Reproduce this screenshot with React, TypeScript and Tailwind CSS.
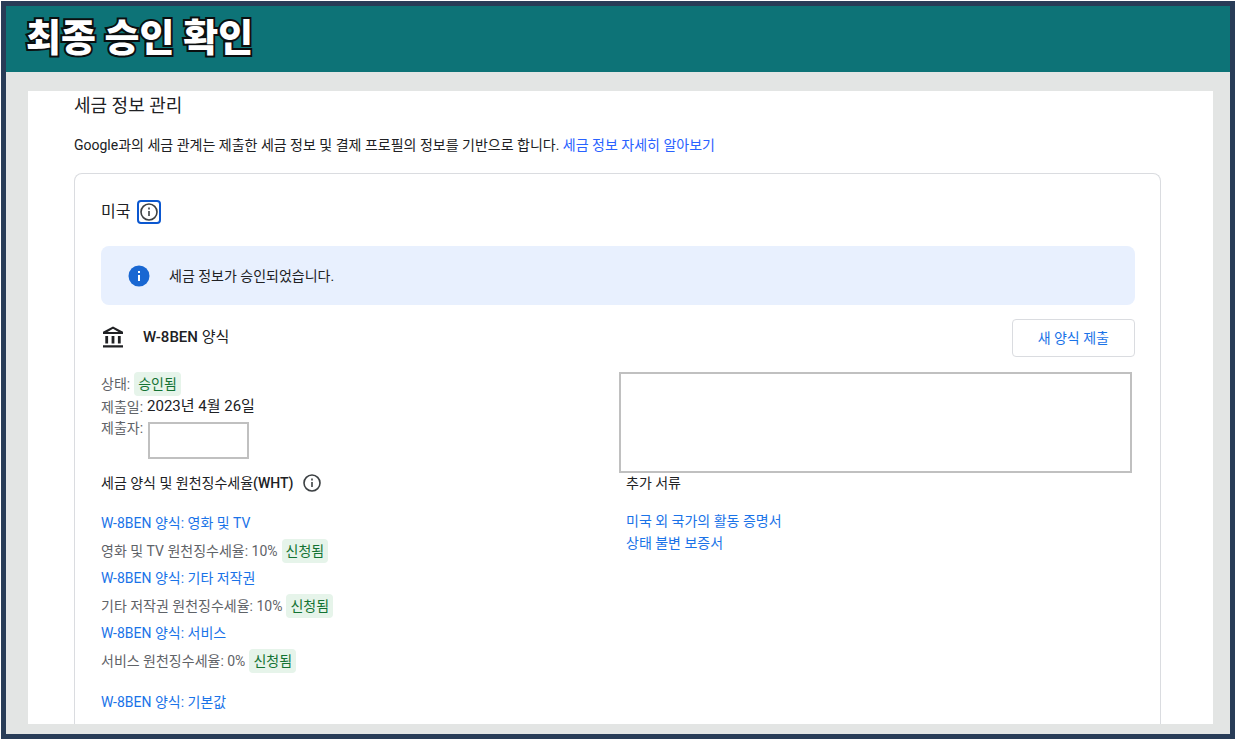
import type { ReactNode } from 'react'

type TaxForm = { name: string; rate: string }

const forms: TaxForm[] = [
  { name: 'W-8BEN 양식: 영화 및 TV', rate: '영화 및 TV 원천징수세율: 10%' },
  { name: 'W-8BEN 양식: 기타 저작권', rate: '기타 저작권 원천징수세율: 10%' },
  { name: 'W-8BEN 양식: 서비스', rate: '서비스 원천징수세율: 0%' },
]

const documents = ['미국 외 국가의 활동 증명서', '상태 불변 보증서']

export default function App() {
  return (
    <div className="min-h-screen flex flex-col bg-white p-px font-['Roboto','Noto_Sans_CJK_KR',sans-serif] text-sm text-[#202124]">
      <div className="flex-1 flex flex-col border-[5px] border-[#283c57] bg-[#e3e5e4]">
        <header className="h-[66px] flex items-center bg-[#0d7377] px-5 pb-2">
          <h1 className="font-['Noto_Sans_CJK_KR',sans-serif] text-[38px] leading-none font-black text-white [-webkit-text-stroke:4px_#0b0f10] [paint-order:stroke_fill]">
            최종 승인 확인
          </h1>
        </header>

        <main className="flex-1 flex flex-col mt-[19px] mb-[10px] ml-[22px] mr-[17px] bg-white pl-[46px] pr-[52px]">
          <h2 className="mt-px text-lg leading-7">세금 정보 관리</h2>
          <p className="mt-[15px] leading-5">
            Google과의 세금 관계는 제출한 세금 정보 및 결제 프로필의 정보를 기반으로 합니다.{' '}
            <a href="#learn" className="text-[#2962ff]">세금 정보 자세히 알아보기</a>
          </p>

          <section className="flex-1 mt-[18px] rounded-t-lg border border-b-0 border-[#dadce0] pl-[26px] pr-[25px] pt-[26px]">
            <div className="flex items-center gap-[7px]">
              <h3 className="text-base leading-6">미국</h3>
              <button
                type="button"
                aria-label="미국 정보"
                className="size-6 flex items-center justify-center rounded-sm border-2 border-[#0b57d0]"
              >
                <InfoIcon />
              </button>
            </div>

            <div className="mt-[22px] flex items-center gap-[18px] rounded-lg bg-[#e8f0fe] px-[26px] h-[59px]">
              <InfoFilledIcon />
              <p>세금 정보가 승인되었습니다.</p>
            </div>

            <div className="mt-[14px] flex items-center">
              <BankIcon />
              <h3 className="ml-[18px] text-[15px]"><span className="font-medium">W-8BEN</span> 양식</h3>
              <button
                type="button"
                className="ml-auto h-[38px] rounded border border-[#dadce0] px-[25px] text-[#1a73e8]"
              >
                새 양식 제출
              </button>
            </div>

            <div className="mt-[15px] grid grid-cols-2">
              <div>
                <dl className="text-[#5f6368]">
                  <div className="flex items-center gap-1 h-6">
                    <dt>상태:</dt>
                    <dd><Badge>승인됨</Badge></dd>
                  </div>
                  <div className="flex items-center gap-1 h-[22px]">
                    <dt>제출일:</dt>
                    <dd className="text-[15px] text-[#202124]">2023년 4월 26일</dd>
                  </div>
                  <div className="flex items-start gap-[5px] h-[41px]">
                    <dt className="leading-5">제출자:</dt>
                    <dd className="mt-1 h-[37px] w-[101px] border-2 border-[#c0c0c0] bg-white" />
                  </div>
                </dl>

                <div className="mt-3 flex items-center gap-2 h-6">
                  <h4>세금 양식 및 원천징수세율<span className="font-medium">(WHT)</span></h4>
                  <button type="button" aria-label="원천징수세율 정보">
                    <InfoIcon />
                  </button>
                </div>

                <ul className="mt-[14px]">
                  {forms.map((form) => (
                    <li key={form.name}>
                      <a href="#form" className="block leading-7 text-[#1a73e8]">{form.name}</a>
                      <div className="flex items-center gap-1 h-[27px] text-[#5f6368]">
                        <span>{form.rate}</span>
                        <Badge>신청됨</Badge>
                      </div>
                    </li>
                  ))}
                  <li className="mt-[14px]">
                    <a href="#form" className="block leading-7 text-[#1a73e8]">W-8BEN 양식: 기본값</a>
                  </li>
                </ul>
              </div>

              <div>
                <div className="ml-px mr-[3px] h-[101px] border-2 border-[#c0c0c0] bg-white" />
                <div className="px-2">
                  <h4 className="leading-5">추가 서류</h4>
                  <ul className="mt-[17px]">
                    {documents.map((doc) => (
                      <li key={doc}>
                        <a href="#doc" className="block leading-[22px] text-[#1a73e8]">{doc}</a>
                      </li>
                    ))}
                  </ul>
                </div>
              </div>
            </div>
          </section>
        </main>
      </div>
    </div>
  )
}

function Badge({ children }: { children: ReactNode }) {
  return (
    <span className="inline-flex items-center h-6 rounded bg-[#e6f4ea] px-1 text-[#137333]">
      {children}
    </span>
  )
}

function InfoIcon() {
  return (
    <svg className="size-[22px] shrink-0" viewBox="1 1 22 22" fill="none" aria-hidden="true">
      <circle cx="12" cy="12" r="8" stroke="#3c4043" strokeWidth="1.6" />
      <path d="M12 11v5" stroke="#3c4043" strokeWidth="1.6" />
      <path d="M12 7.6v1.8" stroke="#3c4043" strokeWidth="1.6" />
    </svg>
  )
}

function InfoFilledIcon() {
  return (
    <svg className="size-6 shrink-0" viewBox="0 0 24 24" aria-hidden="true">
      <circle cx="12" cy="12" r="10.5" fill="#1967d2" />
      <path d="M11 11h2v6h-2zM11 7h2v2h-2z" fill="#fff" />
    </svg>
  )
}

function BankIcon() {
  return (
    <svg className="size-6 shrink-0" viewBox="0 0 24 24" fill="#202124" aria-hidden="true">
      <path d="M12 .5 2 5.8V8h20V5.8zM12 2.7 17.5 6h-11zM4.3 10h2.8v7.5H4.3zM10.6 10h2.8v7.5h-2.8zM16.9 10h2.8v7.5h-2.8zM2 19.2h20v2.3H2z" fillRule="evenodd" />
    </svg>
  )
}
